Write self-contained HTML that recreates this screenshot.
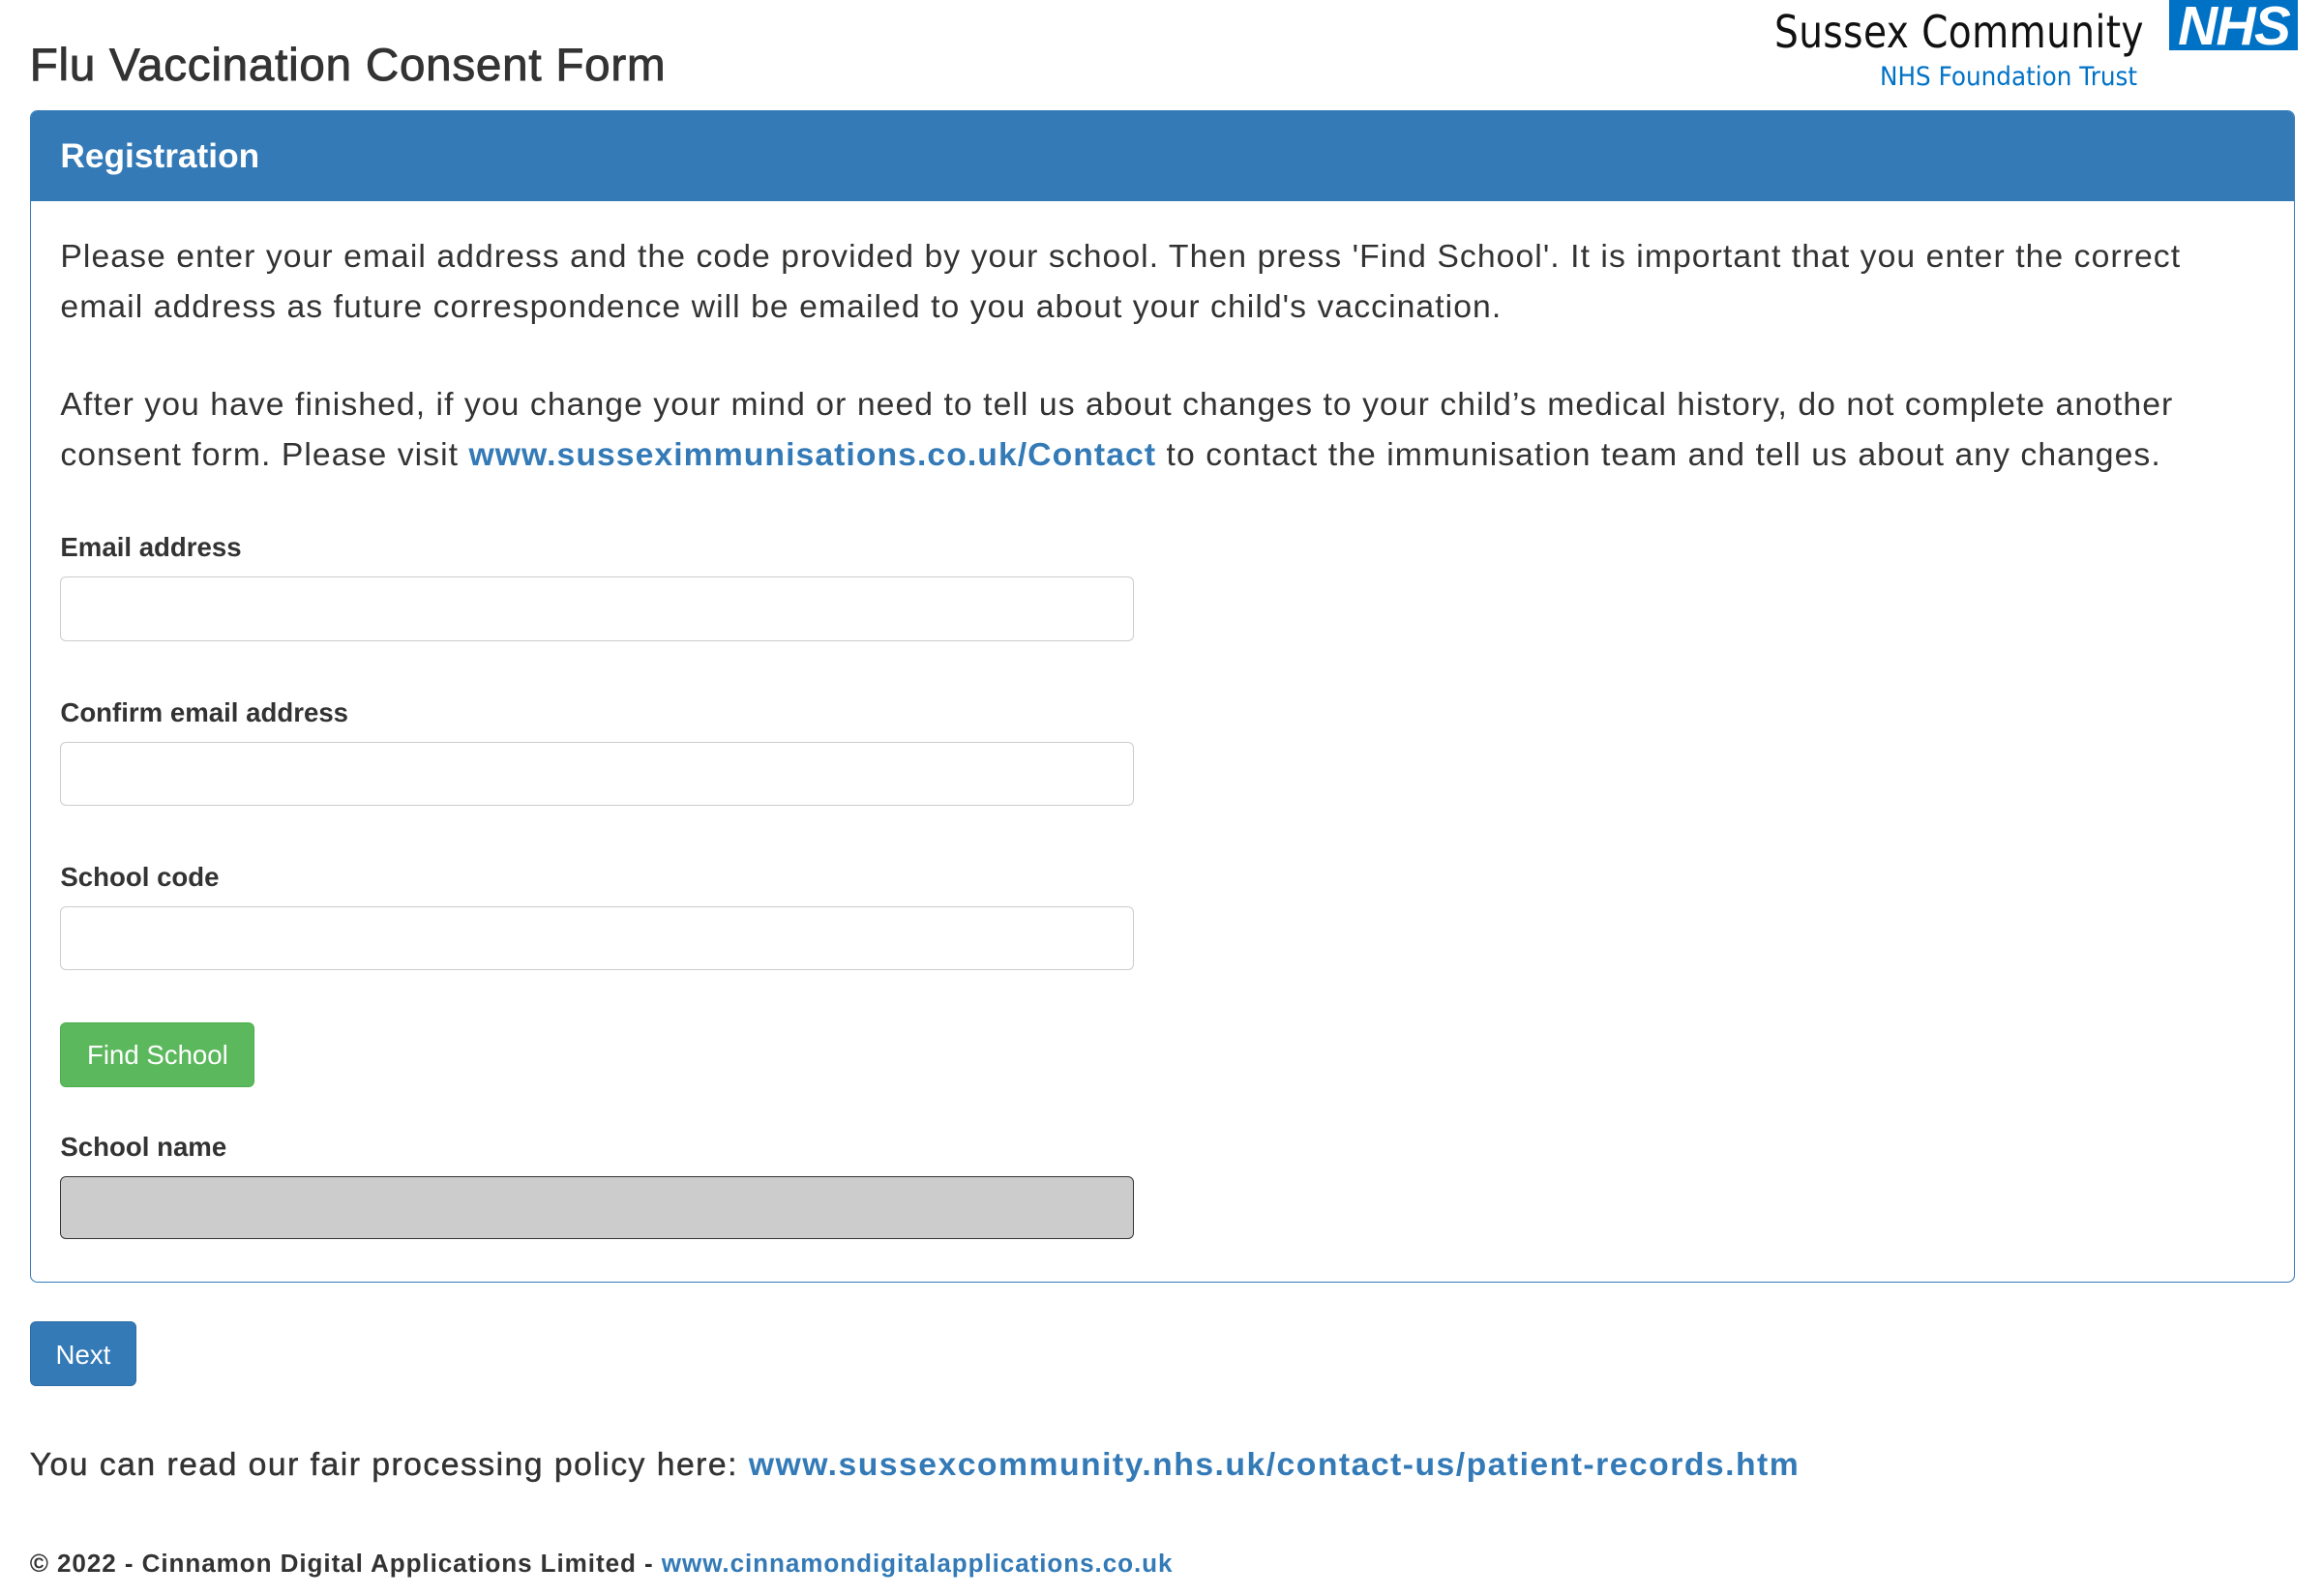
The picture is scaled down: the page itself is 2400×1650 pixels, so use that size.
<!DOCTYPE html>
<html><head><meta charset="utf-8"><style>
html{zoom:1.53453}
body{margin:0;width:1564px;height:1075px;background:#fff;font-family:"Liberation Sans",Arial,sans-serif;color:#333;position:relative;overflow:hidden}
.a{position:absolute;white-space:nowrap}
h1{position:absolute;left:20px;top:24px;margin:0;font-size:31px;font-weight:normal;line-height:40px;letter-spacing:0.5px;-webkit-text-stroke:0.6px #333}
.panel{position:absolute;left:20px;top:74px;width:1526px;height:790px;box-sizing:border-box;border:1px solid #337ab7;border-radius:5px;overflow:hidden}
.hd{background:#337ab7;height:61px;color:#fff;font-weight:bold;font-size:23px;line-height:61px;padding-left:20px}
p{position:absolute;left:20px;margin:0;font-size:22px;line-height:34px;white-space:nowrap;letter-spacing:0.68px}
a{color:#337ab7;font-weight:bold;text-decoration:none}
.lbl{position:absolute;left:20px;font-size:18px;font-weight:bold}
.in{position:absolute;left:20px;width:722px;height:42px;border:1px solid #ccc;border-radius:4px;background:#fff}
.btn{position:absolute;color:#fff;font-size:18px;border-radius:4px;text-align:center;line-height:44px;height:44px}
</style></head><body>
<h1>Flu Vaccination Consent Form</h1>
<div class="a" style="left:1195px;top:4px;font-size:30px;color:#111;letter-spacing:0.3px;font-family:'DejaVu Sans',sans-serif;font-weight:normal;transform:scaleX(0.85);transform-origin:left">Sussex Community</div>
<div class="a" style="left:1461px;top:0;width:87px;height:34px;background:#0072c6;color:#fff;font-weight:bold;font-style:italic;font-size:37px;line-height:36px;text-align:center;letter-spacing:-1px">NHS</div>
<div class="a" style="left:1266px;top:42px;font-size:17.5px;color:#0072c6;font-family:'DejaVu Sans',sans-serif;transform:scaleX(0.92);transform-origin:left">NHS Foundation Trust</div>
<div class="panel">
<div class="hd">Registration</div>
<p style="top:81px">Please enter your email address and the code provided by your school. Then press 'Find School'. It is important that you enter the correct<br>email address as future correspondence will be emailed to you about your child's vaccination.</p>
<p style="top:181px">After you have finished, if you change your mind or need to tell us about changes to your child’s medical history, do not complete another<br>consent form. Please visit <a>www.susseximmunisations.co.uk/Contact</a> to contact the immunisation team and tell us about any changes.</p>
<div class="lbl" style="top:284px">Email address</div>
<div class="in" style="top:314px"></div>
<div class="lbl" style="top:395px">Confirm email address</div>
<div class="in" style="top:425px"></div>
<div class="lbl" style="top:506px">School code</div>
<div class="in" style="top:536px"></div>
<div class="btn" style="left:20px;top:614px;width:131px;background:#5cb85c;border:1px solid #4cae4c;box-sizing:border-box;line-height:43px">Find School</div>
<div class="lbl" style="top:688px">School name</div>
<div class="in" style="top:718px;background:#ccc;border:1px solid #333;height:41px"></div>
</div>
<div class="btn" style="left:20px;top:890px;width:72px;background:#337ab7;border:1px solid #2e6da4;box-sizing:border-box">Next</div>
<div class="a" style="left:20px;top:974px;font-size:22px;letter-spacing:0.95px;-webkit-text-stroke:0.3px #333">You can read our fair processing policy here: <a style="-webkit-text-stroke:0">www.sussexcommunity.nhs.uk/contact-us/patient-records.htm</a></div>
<div class="a" style="left:20px;top:1043px;font-size:17px;font-weight:bold;letter-spacing:0.6px">© 2022 - Cinnamon Digital Applications Limited - <a>www.cinnamondigitalapplications.co.uk</a></div>
</body></html>
